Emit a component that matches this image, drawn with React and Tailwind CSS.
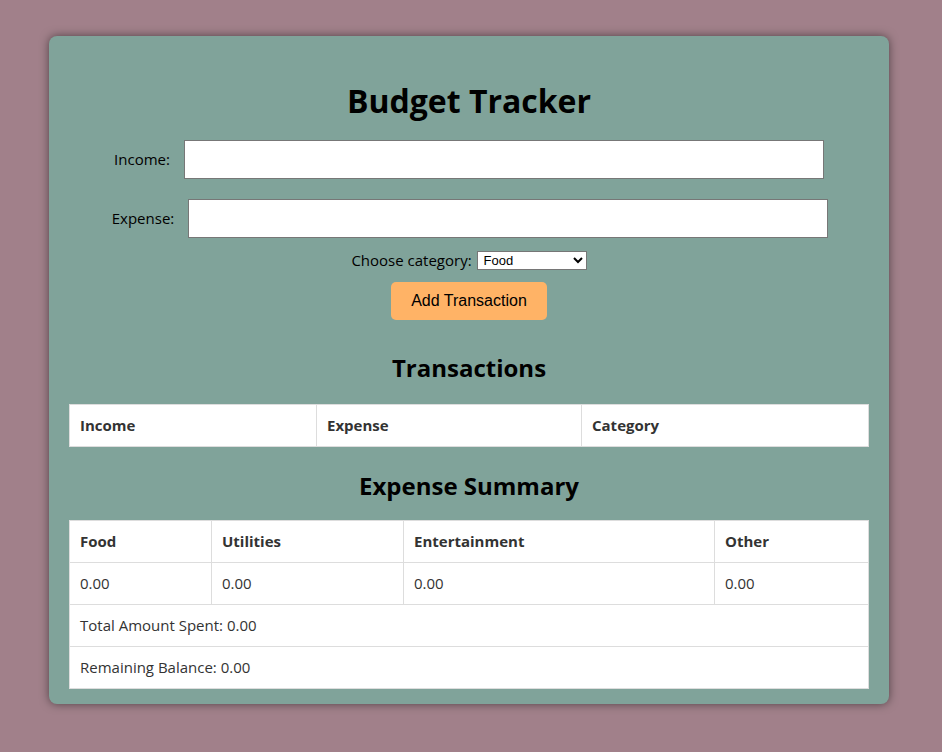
const font = { fontFamily: '"Open Sans", "Noto Sans", sans-serif' };

export default function App() {
  const cell = 'border border-[#ddd] px-[10px] h-[42px] text-left text-[15px] text-[#333]';
  return (
    <div className="min-h-[752px] bg-[#a1808a] pt-[36px] px-[49px]" style={font}>
      <div className="w-[840px] h-[668px] bg-[#80a39a] rounded-[8px] shadow-[0_0_10px_rgba(0,0,0,0.5)] px-[20px] pt-[40px]">
        <h1 className="text-center text-[32px] font-bold text-black leading-[50px]">Budget Tracker</h1>
        <div className="flex justify-center items-center gap-[14px] mt-[14px] text-[15px]">
          <label>Income:</label>
          <input className="w-[640px] h-[39px] bg-white border border-[#777]" />
        </div>
        <div className="flex justify-center items-center gap-[14px] mt-[20px] ml-[2px] text-[15px]">
          <label>Expense:</label>
          <input className="w-[640px] h-[39px] bg-white border border-[#777]" />
        </div>
        <div className="flex justify-center items-center gap-[5px] mt-[11px] text-[15px]">
          <span>Choose category:</span>
          <select className="w-[110px] h-[19px] bg-white border border-[#767676] text-[13px] pl-[2px]" style={{ fontFamily: 'Arial, sans-serif' }}>
            <option>Food</option>
            <option>Utilities</option>
            <option>Entertainment</option>
            <option>Other</option>
          </select>
        </div>
        <div className="flex justify-center mt-[10px]">
          <button className="w-[156px] h-[38px] bg-[#ffb366] rounded-[5px] text-[16px] text-black" style={{ fontFamily: '"Liberation Sans", Arial, sans-serif' }}>Add Transaction</button>
        </div>
        <h2 className="text-center text-[24px] font-bold mt-[28px] leading-[40px]">Transactions</h2>
        <table className="w-[800px] mt-[16px] bg-white border-collapse">
          <thead>
            <tr>
              <th className={cell + ' w-[247px] font-bold'}>Income</th>
              <th className={cell + ' w-[265px] font-bold'}>Expense</th>
              <th className={cell + ' font-bold'}>Category</th>
            </tr>
          </thead>
        </table>
        <h2 className="text-center text-[24px] font-bold mt-[19px] leading-[40px]">Expense Summary</h2>
        <table className="w-[800px] mt-[14px] bg-white border-collapse">
          <tbody>
            <tr>
              <th className={cell + ' w-[142px]'}>Food</th>
              <th className={cell + ' w-[192px]'}>Utilities</th>
              <th className={cell + ' w-[311px]'}>Entertainment</th>
              <th className={cell}>Other</th>
            </tr>
            <tr>
              <td className={cell}>0.00</td>
              <td className={cell}>0.00</td>
              <td className={cell}>0.00</td>
              <td className={cell}>0.00</td>
            </tr>
            <tr><td colSpan={4} className={cell}>Total Amount Spent: 0.00</td></tr>
            <tr><td colSpan={4} className={cell}>Remaining Balance: 0.00</td></tr>
          </tbody>
        </table>
      </div>
    </div>
  );
}
